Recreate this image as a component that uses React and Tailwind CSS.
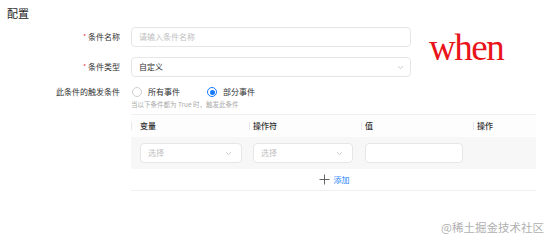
import React from "react";

const cjk = { fontFamily: '"Noto Sans CJK SC", "Noto Sans", sans-serif' };

// 小的下拉箭头
const Chevron = () => (
  <svg width="7" height="5" viewBox="0 0 7 5" className="shrink-0">
    <path d="M1 1.2 L3.5 3.6 L6 1.2" fill="none" stroke="#c4c4c4" strokeWidth="0.9" />
  </svg>
);

const Label = ({ required, children }) => (
  <div className="w-[120px] shrink-0 text-right text-[8px] leading-[10px] text-[#333] pr-0">
    {required && <span className="text-[#f5222d] text-[6px] align-top mr-[2px]">*</span>}
    {children}
  </div>
);

const SelectBox = ({ width, placeholder }) => (
  <div
    className={`flex items-center justify-between h-[20px] border border-[#e6e6e6] rounded-[4px] bg-white pl-[7px] pr-[9px] ${width}`}
  >
    <span className="text-[8px] leading-[10px] text-[#c0c0c0]">{placeholder}</span>
    <Chevron />
  </div>
);

const Radio = ({ checked, children }) => (
  <div className="flex items-center gap-[6px]">
    <span
      className={`flex items-center justify-center w-[10px] h-[10px] rounded-full border ${
        checked ? "border-[#1677ff]" : "border-[#cfcfcf]"
      }`}
    >
      {checked && <span className="w-[5px] h-[5px] rounded-full bg-[#1677ff]" />}
    </span>
    <span className="text-[8px] leading-[10px] text-[#333]">{children}</span>
  </div>
);

const HeadCell = ({ children }) => (
  <div className="flex items-center h-full">
    <span className="w-px h-[8px] bg-[#e8e8e8]" />
    <span className="pl-[3px] text-[8px] leading-[10px] font-medium text-[#333]">{children}</span>
  </div>
);

export default function App() {
  return (
    <div className="w-[554px] h-[241px] bg-white relative overflow-hidden" style={cjk}>
      <div className="pt-[6px] pl-[7px] text-[11px] leading-[14px] text-[#222]">配置</div>

      <div className="flex items-start mt-[7px]">
        <div className="flex flex-col gap-[10px]">
          <div className="flex items-center gap-[11px]">
            <Label required>条件名称</Label>
            <div className="w-[280px] h-[20px] border border-[#e6e6e6] rounded-[4px] flex items-center pl-[7px]">
              <span className="text-[8px] leading-[10px] text-[#c0c0c0]">请输入条件名称</span>
            </div>
          </div>
          <div className="flex items-center gap-[11px]">
            <Label required>条件类型</Label>
            <div className="w-[280px] h-[20px] border border-[#e6e6e6] rounded-[4px] flex items-center justify-between pl-[7px] pr-[6px]">
              <span className="text-[8px] leading-[10px] text-[#333]">自定义</span>
              <Chevron />
            </div>
          </div>
        </div>
        <div
          className="ml-[18px] mt-[2px] text-[37px] leading-[37px] tracking-[-1.5px] text-[#e8141a]"
          style={{ fontFamily: '"Liberation Serif", "Times New Roman", serif' }}
        >
          when
        </div>
      </div>

      <div className="flex items-center gap-[11px] mt-[10px]">
        <Label>此条件的触发条件</Label>
        <div className="flex items-center gap-[27px] pl-[1px]">
          <Radio>所有事件</Radio>
          <Radio checked>部分事件</Radio>
        </div>
      </div>
      <div className="ml-[131px] mt-[3px] text-[6.5px] leading-[9px] text-[#aaa]">
        当以下条件都为 True 时，触发此条件
      </div>

      <div className="ml-[131px] mt-[5px] w-[405px]">
        <div className="grid grid-cols-[4px_114px_112px_112px_63px] h-[23px] border-t border-[#f0f0f0] bg-[#fdfdfd]">
          <div className="flex items-center">
            <span className="w-px h-[8px] bg-[#e8e8e8]" />
          </div>
          <div className="flex items-center pl-[5px]">
            <span className="text-[8px] leading-[10px] font-medium text-[#333]">变量</span>
          </div>
          <HeadCell>操作符</HeadCell>
          <HeadCell>值</HeadCell>
          <HeadCell>操作</HeadCell>
        </div>
        <div className="grid grid-cols-[4px_114px_112px_112px_63px] h-[32px] items-center bg-[#f7f7f7]">
          <div />
          <div className="pl-[5px]">
            <SelectBox width="w-[102px]" placeholder="选择" />
          </div>
          <div className="pl-[4px]">
            <SelectBox width="w-[100px]" placeholder="选择" />
          </div>
          <div className="pl-[4px]">
            <div className="w-[98px] h-[20px] border border-[#e6e6e6] rounded-[4px] bg-white" />
          </div>
          <div />
        </div>
        <div className="flex items-center justify-center h-[22px] border-b border-[#f0f0f0] gap-[4px] pl-[1px]">
          <svg width="11" height="11" viewBox="0 0 11 11">
            <path d="M5.5 0.5 V10.5 M0.5 5.5 H10.5" stroke="#555" strokeWidth="0.9" />
          </svg>
          <span className="text-[8px] leading-[10px] text-[#1e80ff]">添加</span>
        </div>
      </div>

      <div className="absolute right-[10px] top-[219px] text-[11.5px] leading-[16px] text-[#b0b0b0]">
        @稀土掘金技术社区
      </div>
    </div>
  );
}
